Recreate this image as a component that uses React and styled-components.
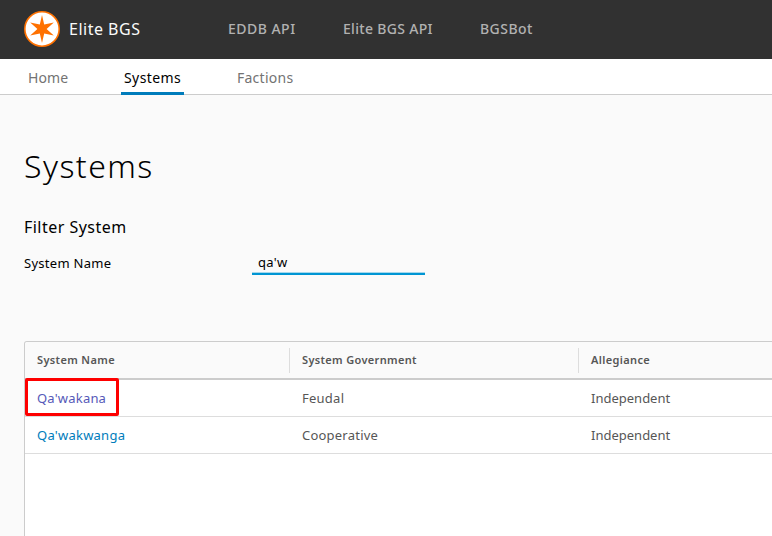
import React from "react";
import styled, { createGlobalStyle } from "styled-components";

const GlobalStyle = createGlobalStyle`
  *, *::before, *::after { box-sizing: border-box; }
  body {
    margin: 0;
    overflow: hidden;
    background: #fafafa;
    color: #000;
    font-family: "Noto Sans", "Open Sans", sans-serif;
    font-size: 13px;
  }
`;

const Page = styled.div`
  display: flex;
  flex-direction: column;
  width: 100%;
  height: 100vh;
  overflow: hidden;
`;

const Header = styled.header`
  display: flex;
  flex: none;
  align-items: center;
  height: 59px;
  padding: 0 0 1px 24px;
  background: #313131;
`;

const Brand = styled.a`
  display: flex;
  align-items: center;
  width: 180px;
  color: #fafafa;
  font-size: 16px;
  letter-spacing: 0.5px;
  line-height: 24px;
  white-space: nowrap;
`;

const Logo = styled.svg`
  flex: none;
  width: 36px;
  height: 36px;
  margin-right: 9px;
`;

const HeaderNav = styled.nav`
  display: flex;
  padding-left: 24px;
`;

const HeaderLink = styled.a`
  width: ${(p) => p.$width}px;
  color: #b1b1b1;
  font-size: 14px;
  font-weight: 500;
  letter-spacing: ${(p) => p.$spacing}px;
  line-height: 24px;
  white-space: nowrap;
`;

const SubNav = styled.nav`
  display: flex;
  flex: none;
  height: 36px;
  padding-left: 25px;
  background: #fff;
  border-bottom: 1px solid #ccc;
`;

const SubNavLink = styled.a`
  width: ${(p) => p.$width}px;
  height: 36px;
  margin-right: 50px;
  padding: 0 3px;
  color: ${(p) => (p.$active ? "#000" : "#737373")};
  font-size: 14px;
  letter-spacing: ${(p) => p.$spacing}px;
  line-height: 37px;
  white-space: nowrap;
  box-shadow: ${(p) => (p.$active ? "inset 0 -3px #007cbb" : "none")};
`;

const Content = styled.main`
  display: flex;
  flex: 1;
  flex-direction: column;
  min-height: 0;
  padding: 47px 0 0 24px;
`;

const Title = styled.h2`
  margin: 0;
  font-size: 32px;
  font-weight: 300;
  letter-spacing: 1.45px;
  line-height: 48px;
`;

const SectionTitle = styled.h4`
  margin: 25px 0 0;
  font-size: 16px;
  font-weight: 400;
  letter-spacing: 0.47px;
  line-height: 24px;
`;

const Field = styled.div`
  display: flex;
  height: 36px;
  align-items: flex-end;
`;

const FieldLabel = styled.label`
  width: 228px;
  font-size: 13px;
  letter-spacing: 0.28px;
  line-height: 24px;
`;

const TextInput = styled.input`
  width: 173px;
  height: 24px;
  margin: 0;
  padding: 0 6px 3px;
  border: 0;
  border-radius: 0;
  outline: 0;
  background: linear-gradient(#a6d8ec 0 1px, #0095d3 1px) bottom / 100% 3px no-repeat;
  color: #000;
  font: inherit;
  letter-spacing: 0.3px;
`;

const Grid = styled.section`
  flex: 1;
  min-height: 0;
  margin: 66px -4px 0 0;
  border: 1px solid #ccc;
  border-bottom: 0;
  border-radius: 3px 0 0 0;
  background: #fff;
`;

const GridRow = styled.div`
  display: grid;
  grid-template-columns: 265px 289px 1fr;
  height: 37px;
  border-bottom: 1px solid #ddd;
`;

const GridHead = styled(GridRow)`
  align-items: end;
  height: 38px;
  padding-bottom: 5px;
  background: #fafafa;
  border-bottom: 2px solid #ccc;
  border-radius: 3px 0 0 0;
`;

const HeadCell = styled.div`
  height: 25px;
  padding-left: 12px;
  border-right: ${(p) => (p.$last ? "0" : "1px solid #ddd")};
  color: #565656;
  font-size: 11px;
  font-weight: 600;
  letter-spacing: ${(p) => p.$spacing}px;
  line-height: 24px;
  white-space: nowrap;
`;

const Cell = styled.div`
  position: relative;
  padding-left: 12px;
  color: #565656;
  letter-spacing: ${(p) => p.$spacing}px;
  line-height: 37px;
  white-space: nowrap;
`;

const SystemLink = styled.a`
  color: ${(p) => (p.$visited ? "#5659b8" : "#007cbb")};
`;

const Highlight = styled.span`
  position: absolute;
  z-index: 1;
  top: -2px;
  left: 0;
  width: 94px;
  height: 38px;
  border: 3px solid #fe0000;
  border-radius: 2px;
`;

const headerLinks = [
  { label: "EDDB API", width: 115, spacing: 0.48 },
  { label: "Elite BGS API", width: 137, spacing: 0.32 },
  { label: "BGSBot", width: 60, spacing: 0.45 },
];

const tabs = [
  { label: "Home", width: 46, spacing: 0.1 },
  { label: "Systems", width: 63, spacing: 0.4, active: true },
  { label: "Factions", width: 63, spacing: 0.25 },
];

const columns = [
  { label: "System Name", spacing: 0.36 },
  { label: "System Government", spacing: 0.34 },
  { label: "Allegiance", spacing: 0.36 },
];

const systems = [
  { name: "Qa'wakana", government: "Feudal", allegiance: "Independent", visited: true, spacing: [0.2, 0.25, 0] },
  { name: "Qa'wakwanga", government: "Cooperative", allegiance: "Independent", spacing: [0.24, 0.22, 0] },
];

export default function App() {
  return (
    <Page>
      <GlobalStyle />
      <Header>
        <Brand>
          <Logo viewBox="0 0 36 36" aria-hidden="true">
            <circle cx="18" cy="18" r="17.2" fill="#fff" stroke="#ff7100" strokeWidth="1.6" />
            <path
              d="M18 4 20.2 13.4 29.8 11.5 22.6 18 29.8 24.5 20.2 22.6 18 32 15.8 22.6 6.2 24.5 13.4 18 6.2 11.5 15.8 13.4Z"
              fill="#ff7100"
            />
          </Logo>
          Elite BGS
        </Brand>
        <HeaderNav>
          {headerLinks.map((link) => (
            <HeaderLink key={link.label} $width={link.width} $spacing={link.spacing}>
              {link.label}
            </HeaderLink>
          ))}
        </HeaderNav>
      </Header>
      <SubNav>
        {tabs.map((tab) => (
          <SubNavLink key={tab.label} $active={tab.active} $width={tab.width} $spacing={tab.spacing}>
            {tab.label}
          </SubNavLink>
        ))}
      </SubNav>
      <Content>
        <Title>Systems</Title>
        <SectionTitle>Filter System</SectionTitle>
        <Field>
          <FieldLabel htmlFor="system-name">System Name</FieldLabel>
          <TextInput id="system-name" type="text" defaultValue="qa'w" spellCheck={false} />
        </Field>
        <Grid>
          <GridHead>
            {columns.map((column, i) => (
              <HeadCell key={column.label} $spacing={column.spacing} $last={i === columns.length - 1}>
                {column.label}
              </HeadCell>
            ))}
          </GridHead>
          {systems.map((system) => (
            <GridRow key={system.name}>
              <Cell $spacing={system.spacing[0]}>
                {system.visited && <Highlight />}
                <SystemLink $visited={system.visited}>{system.name}</SystemLink>
              </Cell>
              <Cell $spacing={system.spacing[1]}>{system.government}</Cell>
              <Cell $spacing={system.spacing[2]}>{system.allegiance}</Cell>
            </GridRow>
          ))}
        </Grid>
      </Content>
    </Page>
  );
}
